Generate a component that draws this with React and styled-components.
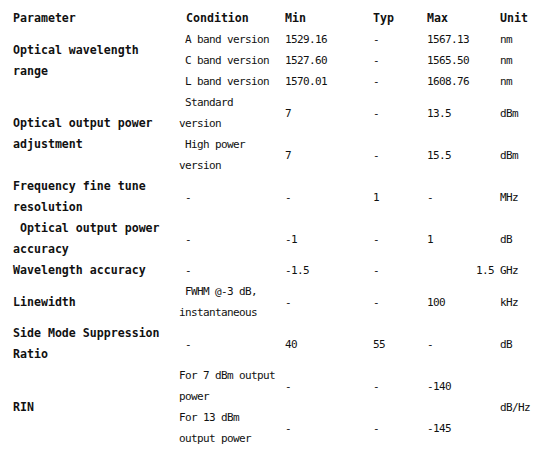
import React from 'react';
import styled, { createGlobalStyle } from 'styled-components';

const GlobalStyle = createGlobalStyle`
  body {
    margin: 0;
    background: #fff;
  }
`;

const Table = styled.table`
  margin: 8px 0 0 0;
  border-collapse: collapse;
  table-layout: fixed;
  width: 551px;
  color: #111;
  font-family: "DejaVu Sans Mono", "Liberation Mono", monospace;
  line-height: 21px;
`;

const Col = styled.col`
  width: ${(props) => props.w}px;
`;

const Cell = styled.td`
  padding: 0 ${(props) => props.pr || 0}px 0 ${(props) => props.pl || 0}px;
  vertical-align: middle;
  text-align: ${(props) => props.align || 'left'};
  white-space: normal;
  font-weight: ${(props) => (props.bold ? 'bold' : 'normal')};
  font-size: ${(props) => (props.bold ? '11.6px' : '11px')};
  letter-spacing: ${(props) => (props.bold ? '0' : '-0.62px')};
`;

const cols = [179, 106, 88, 54, 73, 51];
const pads = [13, 0, 0, 0, 0, 0];
const rights = [0, 8, 0, 0, 0, 0];

const sp = '\u00a0';

function Row({ cells }) {
  return (
    <tr>
      {cells.map((c, i) => {
        if (c === null) return null;
        const cell = typeof c === 'string' ? { text: c } : c;
        const idx = cell.col ?? i;
        return (
          <Cell
            key={i}
            rowSpan={cell.rows}
            bold={cell.bold}
            align={cell.align}
            pl={pads[idx]}
            pr={cell.pr ?? rights[idx]}
          >
            {cell.text}
          </Cell>
        );
      })}
    </tr>
  );
}

const P = (text, rows) => ({ text, rows, bold: true, col: 0 });

export default function App() {
  return (
    <>
      <GlobalStyle />
      <Table>
        <colgroup>
          {cols.map((w, i) => (
            <Col key={i} w={w} />
          ))}
        </colgroup>
        <tbody>
          <tr>
            {['Parameter', sp + 'Condition', 'Min', 'Typ', 'Max', 'Unit'].map((h, i) => (
              <Cell key={h} bold pl={pads[i]} pr={rights[i]}>
                {h}
              </Cell>
            ))}
          </tr>
          <Row cells={[P('Optical wavelength range', 3), sp + 'A band version', '1529.16', '-', '1567.13', 'nm']} />
          <Row cells={[null, sp + 'C band version', '1527.60', '-', '1565.50', 'nm']} />
          <Row cells={[null, sp + 'L band version', '1570.01', '-', '1608.76', 'nm']} />
          <Row cells={[P('Optical output power adjustment', 2), sp + 'Standard version', '7', '-', '13.5', 'dBm']} />
          <Row cells={[null, sp + 'High power version', '7', '-', '15.5', 'dBm']} />
          <Row cells={[P('Frequency fine tune resolution'), sp + '-', '-', '1', '-', 'MHz']} />
          <Row cells={[P(sp + 'Optical output power accuracy'), sp + '-', '-1', '-', '1', 'dB']} />
          <Row
            cells={[
              P('Wavelength accuracy'),
              sp + '-',
              '-1.5',
              '-',
              { text: '1.5', align: 'right', pr: 6 },
              'GHz',
            ]}
          />
          <Row cells={[P('Linewidth'), sp + 'FWHM @-3 dB, instantaneous', '-', '-', '100', 'kHz']} />
          <Row cells={[P('Side Mode Suppression Ratio'), sp + '-', '40', '55', '-', 'dB']} />
          <Row cells={[P('RIN', 2), 'For 7 dBm output power', '-', '-', '-140', { text: 'dB/Hz', rows: 2 }]} />
          <Row cells={[null, 'For 13 dBm output power', '-', '-', '-145']} />
        </tbody>
      </Table>
    </>
  );
}
